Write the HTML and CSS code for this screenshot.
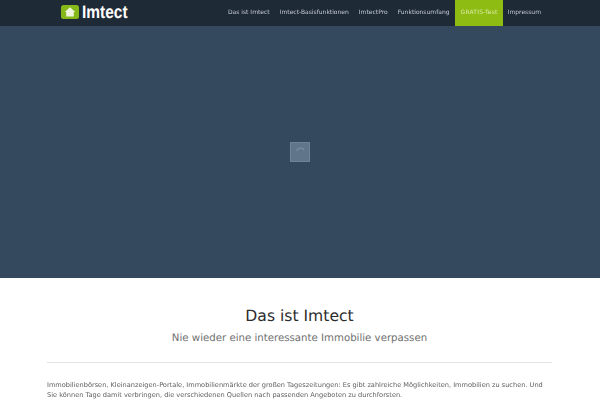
FILE: index.html
```html
<!DOCTYPE html>
<html lang="de">
<head>
<meta charset="utf-8">
<title>Imtect</title>
<link rel="stylesheet" href="styles.css">
</head>
<body>
<header class="topbar">
  <div class="brand">
    <span class="logo-mark">
      <svg viewBox="0 0 18 14" width="18" height="14"><rect width="18" height="14" rx="2.500" fill="#86b81a"/><path d="M9 2.200 14.200 7H12.800V11.400H5.200V7H3.800Z" fill="#eef5dc"/></svg>
    </span>
    <span class="logo-text">Imtect</span>
  </div>
  <nav class="nav">
    <a class="nav-item">Das ist Imtect</a>
    <a class="nav-item">Imtect-Basisfunktionen</a>
    <a class="nav-item">ImtectPro</a>
    <a class="nav-item">Funktionsumfang</a>
    <a class="nav-item nav-active">GRATIS-Test</a>
    <a class="nav-item">Impressum</a>
  </nav>
</header>
<section class="hero">
  <div class="play">
    <svg class="play-icon" viewBox="0 0 18 18" width="18" height="18"><path d="M6 8Q6.500 5 9.500 5T13 7.500" fill="none" stroke="#7c8fa3" stroke-width="1.200"/></svg>
  </div>
</section>
<main class="content">
  <h1 class="title">Das ist Imtect</h1>
  <h2 class="subtitle">Nie wieder eine interessante Immobilie verpassen</h2>
  <hr class="rule">
  <p class="text">Immobilienbörsen, Kleinanzeigen-Portale, Immobilienmärkte der großen Tageszeitungen: Es gibt zahlreiche Möglichkeiten, Immobilien zu suchen. Und Sie können Tage damit verbringen, die verschiedenen Quellen nach passenden Angeboten zu durchforsten.</p>
</main>
</body>
</html>
```
FILE: styles.css
```css
html, body { margin: 0; padding: 0; height: 400px; overflow: hidden; background: #fff; }
body { font-family: "DejaVu Sans", sans-serif; text-rendering: geometricPrecision; }
.topbar { height: 26px; background: #1f2a37; display: flex; justify-content: space-between; padding: 0 54px 0 61px; }
.brand { display: flex; align-items: flex-start; padding-top: 4px; gap: 3px; }
.logo-mark { display: block; height: 14px; }
.logo-text { font-family: "Liberation Sans", sans-serif; font-weight: 700; font-size: 18px; line-height: 16px; color: #fff; transform: scaleX(.86); transform-origin: left; }
.nav { display: flex; will-change: opacity; }
.nav-item { font-size: 6px; line-height: 25px; height: 26px; color: #c3cad2; padding: 0 5px; }
.nav-active { background: #8ebc12; color: #dcebaa; padding: 0 5px 0 6px; letter-spacing: .2px; }
.hero { height: 252px; background: #34495e; display: flex; justify-content: center; padding-top: 116px; box-sizing: border-box; }
.play { width: 20px; height: 20px; box-sizing: border-box; background: #60758a; border: 1px solid #6f8398; display: flex; align-items: center; justify-content: center; }
.content { padding: 0 48px 0 47px; }
.title { margin: 28px 0 0; font-size: 15.600px; line-height: 20px; font-weight: 400; color: #2c2c2c; text-align: center; }
.subtitle { margin: 5px 0 0; font-size: 10.200px; line-height: 16px; font-weight: 400; color: #707070; text-align: center; }
.rule { margin: 15px 0 0; border: 0; border-top: 1px solid #e3e3e3; }
.text { margin: 17px 0 0; font-size: 6.600px; line-height: 10px; color: #606060; will-change: opacity; }
```
